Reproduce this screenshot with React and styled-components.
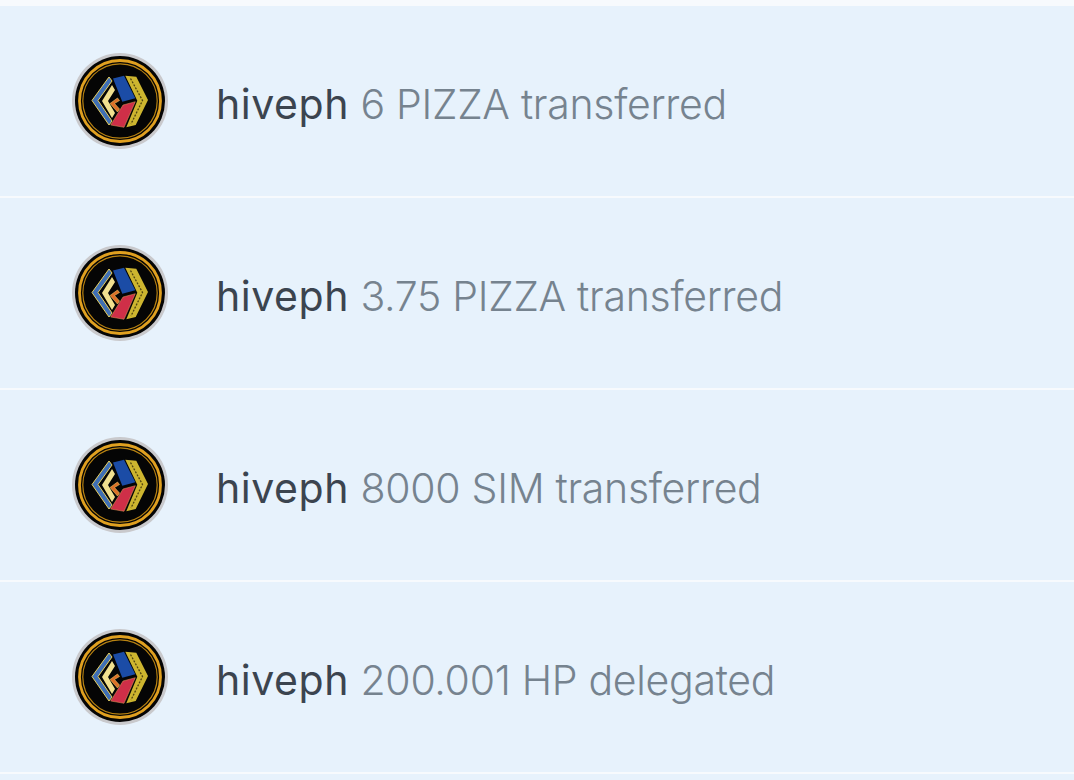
import React from 'react'
import styled, { createGlobalStyle } from 'styled-components'

const GlobalStyle = createGlobalStyle`
    html, body {
        margin: 0;
        padding: 0;
        background: #fff;
        overflow: hidden;
    }
    body {
        font-family: "Inter", "Noto Sans", sans-serif;
    }
`

const notifications = [
    { id: 1, user: 'hiveph', text: '6 PIZZA transferred' },
    { id: 2, user: 'hiveph', text: '3.75 PIZZA transferred' },
    { id: 3, user: 'hiveph', text: '8000 SIM transferred' },
    { id: 4, user: 'hiveph', text: '200.001 HP delegated' },
    { id: 5, user: '', text: '' },
]

const HiveLogo = () => (
    <svg width="96" height="96" viewBox="0 0 96 96">
        <circle cx="48" cy="48" r="48" fill="#c9c9cc" />
        <circle cx="48" cy="48" r="45" fill="#050505" />
        <circle cx="48" cy="48" r="40.5" fill="none" stroke="#e0a020" strokeWidth="2.8" />
        <circle cx="48" cy="48" r="37.2" fill="none" stroke="#b98312" strokeWidth="1.2" />
        {/* left chevrons */}
        <path d="M37 24 L20 47.500 L37 72 L40 68 L26 47.500 L40 28 Z" fill="#3f6fb5" stroke="#e6cf60" strokeWidth="1" />
        <path d="M40 32 L30 48 L40 65 L43 60 L36 48 L43 37 Z" fill="#f1e08f" />
        <path d="M45.500 45 L38 50.500 L45.500 59 L47.500 56 L42.500 50.500 L47.500 47.500 Z" fill="#dd6f28" stroke="#e9c560" strokeWidth="0.6" />
        {/* hive cells */}
        <path d="M41 25.500 L52 22.700 L63.300 45.300 L50.300 48.700 Z" fill="#1b4ca6" />
        <path d="M51 52 L63.300 48.700 L52 74.300 L38.700 72 Z" fill="#cf2f48" stroke="#e8a05a" strokeWidth="0.5" />
        <path d="M53.300 22.700 L64.300 23.700 L76 47 L63.700 72 L54.300 74.300 L65.300 47.700 Z" fill="#cdb52f" />
        <path d="M58.500 25.500 L70.500 47.500 L59 71" fill="none" stroke="#4f4410" strokeWidth="1.3" strokeDasharray="2 1.4" />
    </svg>
)

const App = () => {
    return (
        <>
            <GlobalStyle />
            <List>
                {notifications.map((item) => (
                    <Row key={item.id}>
                        {item.user && (
                            <>
                                <Avatar><HiveLogo /></Avatar>
                                <Message>
                                    <User>{item.user}</User> <Detail>{item.text}</Detail>
                                </Message>
                            </>
                        )}
                    </Row>
                ))}
            </List>
        </>
    )
}

export default App

const List = styled.div`
    width: 1074px;
    height: 780px;
    overflow: hidden;
    padding-top: 6px;
    box-sizing: border-box;
    display: flex;
    flex-direction: column;
    gap: 2px;
    background: #f7fafd;
`
const Row = styled.div`
    flex: 0 0 190px;
    height: 190px;
    display: flex;
    align-items: center;
    background: #e7f2fc;
    padding-left: 72px;
    box-sizing: border-box;
`
const Avatar = styled.div`
    width: 96px;
    height: 96px;
    flex: none;
    margin-right: 48px;
    display: flex;
`
const Message = styled.div`
    font-size: 41px;
    line-height: 50px;
    white-space: nowrap;
    padding-top: 5px;
`
const User = styled.span`
    color: #3b444f;
    letter-spacing: 0.55px;
`
const Detail = styled.span`
    color: #76838f;
    font-weight: 300;
    letter-spacing: -0.3px;
`
